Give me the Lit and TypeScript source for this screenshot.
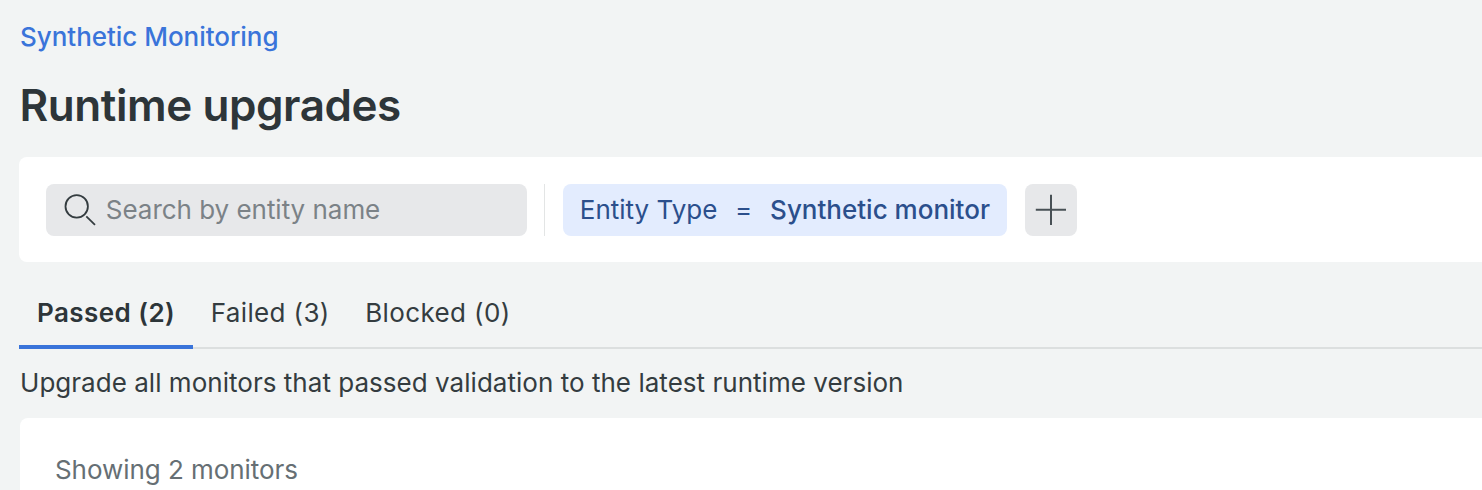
import { LitElement, html, css } from "lit";

class AppRoot extends LitElement {
  static styles = css`
    :host { display: flex; flex-direction: column; box-sizing: border-box; height: 490px; overflow: hidden; background: #f2f4f4; color: #343c40; font-family: Inter, "Liberation Sans", sans-serif; padding-left: 20px; white-space: nowrap; }
    .crumb { color: #3a74da; font-size: 26px; line-height: 32px; height: 32px; margin-top: 21px; font-weight: 500; letter-spacing: -0.03px; }
    h1 { margin: 25px 0 0 -0.5px; font-size: 44px; line-height: 54px; height: 54px; font-weight: 600; color: #2d3539; letter-spacing: -0.43px; }
    .bar { margin: 25px 0 0 -0.6px; height: 105px; box-sizing: border-box; background: #fff; border-radius: 8px 0 0 8px; padding: 27px 26.4px 26px; display: flex; align-items: flex-start; }
    .search { width: 481px; height: 52px; box-sizing: border-box; background: #e7e8ea; border-radius: 8px; display: flex; align-items: center; padding-left: 18px; gap: 10px; font-size: 26px; color: #7b8287; }
    .search span, .chip span, .chip b { padding-bottom: 2px; }
    .search span { letter-spacing: -0.03px; }
    .rule { width: 1px; height: 52px; background: #e3e5e5; margin: 0 18px 0 17px; }
    .chip { width: 444px; height: 52px; box-sizing: border-box; background: #e3ecfe; border-radius: 8px; color: #2b4f8c; font-size: 26px; display: flex; align-items: center; padding-left: 17px; }
    .chip .eq { margin: 0 18px 0 17.5px; }
    .chip b { font-weight: 500; }
    .add { width: 52px; height: 52px; margin-left: 18px; background: #e7e8ea; border-radius: 8px; display: flex; align-items: center; justify-content: center; }
    .tabs { display: flex; height: 87px; box-sizing: border-box; margin-left: -0.6px; box-shadow: inset 0 -2px #dcdfdf; }
    .tab { padding: 34px 18px 0 17.5px; font-size: 26px; line-height: 34px; height: 87px; box-sizing: border-box; letter-spacing: 0.37px; }
    .on { font-weight: 600; color: #2d3539; border-bottom: 4px solid #3a74da; letter-spacing: 0.45px; }
    .note { font-size: 26px; line-height: 34px; margin-top: 17px; letter-spacing: 0.03px; }
    .card { margin-top: 18px; flex: 1; background: #fff; border-top-left-radius: 8px; padding: 35px; font-size: 26px; line-height: 34px; color: #666f74; letter-spacing: -0.06px; }
  `;
  render() {
    return html`
      <div class="crumb"><span>Synthetic Monitoring</span></div>
      <h1><span>Runtime upgrades</span></h1>
      <div class="bar">
        <div class="search">
          <svg width="32" height="32" viewBox="0 0 32 32" fill="none" stroke="#343c40" stroke-width="1.8"><circle cx="12.7" cy="12.4" r="11.2"/><path d="M22.3 22.3 31 30.9"/></svg>
          <span>Search by entity name</span>
        </div>
        <div class="rule"></div>
        <div class="chip"><span>Entity Type</span><span class="eq">=</span><b>Synthetic monitor</b></div>
        <div class="add"><svg width="32" height="32" viewBox="0 0 32 32" stroke="#485055" stroke-width="2"><path d="M16 0.7V31M0.8 15.8H31"/></svg></div>
      </div>
      <div class="tabs"><div class="tab on">Passed (2)</div><div class="tab">Failed (3)</div><div class="tab">Blocked (0)</div></div>
      <div class="note"><span>Upgrade all monitors that passed validation to the latest runtime version</span></div>
      <div class="card">Showing 2 monitors</div>`;
  }
}
customElements.define("app-root", AppRoot);
